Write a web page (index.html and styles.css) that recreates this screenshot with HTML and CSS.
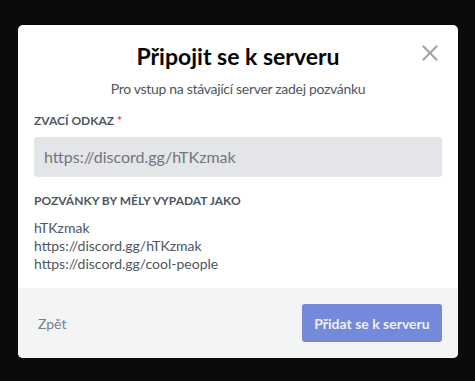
FILE: index.html
```html
<!DOCTYPE html>
<html lang="cs">
<head>
<meta charset="utf-8">
<link rel="stylesheet" href="styles.css">
</head>
<body>
<div class="modal">
  <div class="header">
    <h2 class="title">Připojit se k serveru</h2>
    <p class="subtitle">Pro vstup na stávající server zadej pozvánku</p>
    <button class="close" aria-label="Zavřít">
      <svg width="24" height="24" viewBox="0 0 24 24"><path d="M18.4 4L12 10.4L5.6 4L4 5.6L10.4 12L4 18.4L5.6 20L12 13.6L18.4 20L20 18.4L13.6 12L20 5.6L18.4 4Z" fill="currentColor"/></svg>
    </button>
  </div>
  <div class="body">
    <div class="label">Zvací odkaz <span class="req">*</span></div>
    <div class="input">https://discord.gg/hTKzmak</div>
    <div class="label label-gap">Pozvánky by měly vypadat jako</div>
    <div class="examples">
      <div>hTKzmak</div>
      <div>https://discord.gg/hTKzmak</div>
      <div>https://discord.gg/cool-people</div>
    </div>
  </div>
  <div class="footer">
    <button class="back">Zpět</button>
    <button class="primary">Přidat se k serveru</button>
  </div>
</div>
</body>
</html>
```
FILE: styles.css
```css
html, body {
  margin: 0;
  height: 100%;
}
body {
  background: #0a0c0c;
  font-family: Lato, "Noto Sans", sans-serif;
  padding: 25px 0 0 18px;
  box-sizing: border-box;
}
.modal {
  width: 440px;
  background: #ffffff;
  border-radius: 5px;
  overflow: hidden;
}
.header {
  position: relative;
  padding: 16px 16px 0;
  text-align: center;
}
.title {
  margin: 0;
  font-size: 23px;
  line-height: 30px;
  font-weight: 700;
  color: #060607;
}
.subtitle {
  margin: 9px 0 0;
  font-size: 14px;
  line-height: 18px;
  letter-spacing: -0.3px;
  color: #4f5660;
}
.close {
  position: absolute;
  top: 16px;
  right: 16px;
  padding: 0;
  border: 0;
  background: none;
  color: #a3a6aa;
  width: 24px;
  height: 24px;
}
.close svg { display: block; }
.body {
  padding: 15px 16px 0;
}
.label {
  font-size: 12px;
  line-height: 16px;
  font-weight: 700;
  color: #4f5660;
  text-transform: uppercase;
}
.req { color: #ed4245; }
.input {
  margin-top: 8px;
  height: 40px;
  background: #e3e5e8;
  border-radius: 3px;
  padding: 0 10px;
  font-size: 16px;
  line-height: 40px;
  color: #72767d;
}
.label-gap { margin-top: 16px; }
.examples {
  margin-top: 10px;
  font-size: 14px;
  line-height: 18px;
  color: #4f5660;
  padding-bottom: 15px;
}
.footer {
  background: #f3f4f5;
  height: 70px;
  padding: 0 16px 0 16px;
  box-sizing: border-box;
  display: flex;
  align-items: center;
  justify-content: space-between;
}
.back {
  border: 0;
  background: none;
  font-family: inherit;
  font-size: 14px;
  color: #747f8d;
  padding: 0 4px;
}
.primary {
  border: 0;
  width: 140px;
  height: 38px;
  border-radius: 3px;
  background: #7389da;
  color: #eef0fa;
  font-family: inherit;
  font-size: 14px;
  font-weight: 700;
}
```
